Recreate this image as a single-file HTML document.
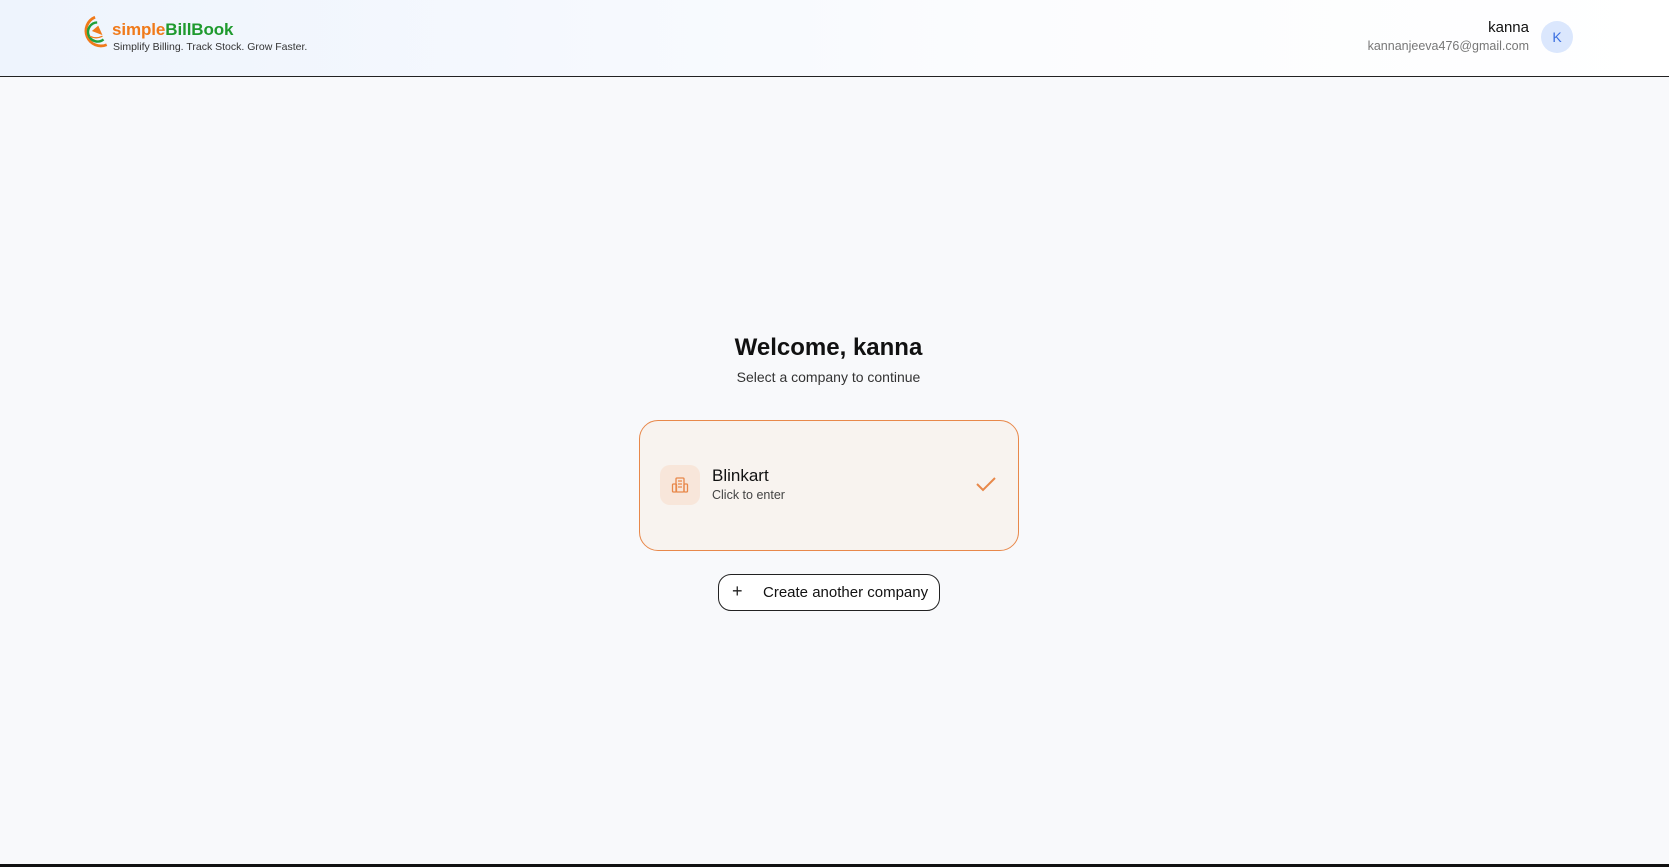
<!DOCTYPE html>
<html><head><meta charset="utf-8"><style>
*{box-sizing:border-box;margin:0;padding:0}
body{width:1669px;height:867px;overflow:hidden;background:#f8f9fb;font-family:"Liberation Sans",sans-serif;position:relative}
.hdr{position:absolute;left:0;top:0;width:1669px;height:77px;background:linear-gradient(90deg,#eef4fd,#fbfcfe 60%,#fff);border-bottom:1.5px solid #222}
.abs{position:absolute;white-space:nowrap}
.bottom{position:absolute;left:0;top:864px;width:1669px;height:3px;background:#111}
</style></head><body>
<div class="hdr">
 <svg class="abs" style="left:77px;top:14px" width="34" height="36" viewBox="0 0 32 34">
  <path d="M17 3 A14 14 0 1 0 28 29" fill="none" stroke="#f07a1a" stroke-width="2.6"/>
  <path d="M19 8 A9 9 0 1 0 25 24" fill="none" stroke="#22a03a" stroke-width="2.3"/>
  <path d="M14 16 L20 11 L24 20 Z" fill="#f07a1a"/>
  <path d="M12 21 Q18 24 24 21" fill="none" stroke="#f07a1a" stroke-width="1.2"/>
 </svg>
 <div class="abs" style="left:112px;top:20px;font-size:17px;font-weight:bold;letter-spacing:-0.1px"><span style="color:#f07a1a">simple</span><span style="color:#1f9a2e">BillBook</span></div>
 <div class="abs" style="left:113px;top:41px;font-size:10.5px;color:#333">Simplify Billing. Track Stock. Grow Faster.</div>
 <div class="abs" style="right:140px;top:19px;font-size:15px;color:#111">kanna</div>
 <div class="abs" style="right:140px;top:39px;font-size:12.5px;color:#777">kannanjeeva476@gmail.com</div>
 <div class="abs" style="left:1541px;top:21px;width:32px;height:32px;border-radius:50%;background:#dbe7fd;color:#3b6fe0;font-size:14px;text-align:center;line-height:32px">K</div>
</div>
<div class="abs" style="left:0;width:1657px;top:334px;text-align:center;font-size:24px;font-weight:bold;color:#111">Welcome, kanna</div>
<div class="abs" style="left:0;width:1657px;top:369px;text-align:center;font-size:14px;color:#333">Select a company to continue</div>
<div class="abs" style="left:639px;top:420px;width:380px;height:131px;border:1px solid #e8884a;border-radius:19px;background:#f8f3ef"></div>
<div class="abs" style="left:660px;top:465px;width:40px;height:40px;border-radius:10px;background:#f8e6da"></div>
<svg class="abs" style="left:670px;top:475px" width="20" height="20" viewBox="0 0 20 20" fill="none" stroke="#e8884a" stroke-width="1.3">
 <rect x="6" y="3" width="8" height="14" rx="1"/><rect x="2.5" y="9" width="4" height="8" rx="1"/><rect x="14" y="9" width="3.5" height="8" rx="1"/>
 <path d="M8 6h4M8 9h4M8 12h4"/>
</svg>
<div class="abs" style="left:712px;top:466px;font-size:17px;color:#111">Blinkart</div>
<div class="abs" style="left:712px;top:488px;font-size:12.5px;color:#444">Click to enter</div>
<svg class="abs" style="left:975px;top:475px" width="22" height="18" viewBox="0 0 22 18"><path d="M2 9 L8 15 L20 3" fill="none" stroke="#e8884a" stroke-width="2"/></svg>
<div class="abs" style="left:718px;top:574px;width:222px;height:37px;border:1.3px solid #222;border-radius:13px;background:#fff"></div>
<div class="abs" style="left:732px;top:581px;font-size:18px;color:#222">+</div>
<div class="abs" style="left:763px;top:584px;font-size:15px;color:#111">Create another company</div>
<div class="bottom"></div>
</body></html>
